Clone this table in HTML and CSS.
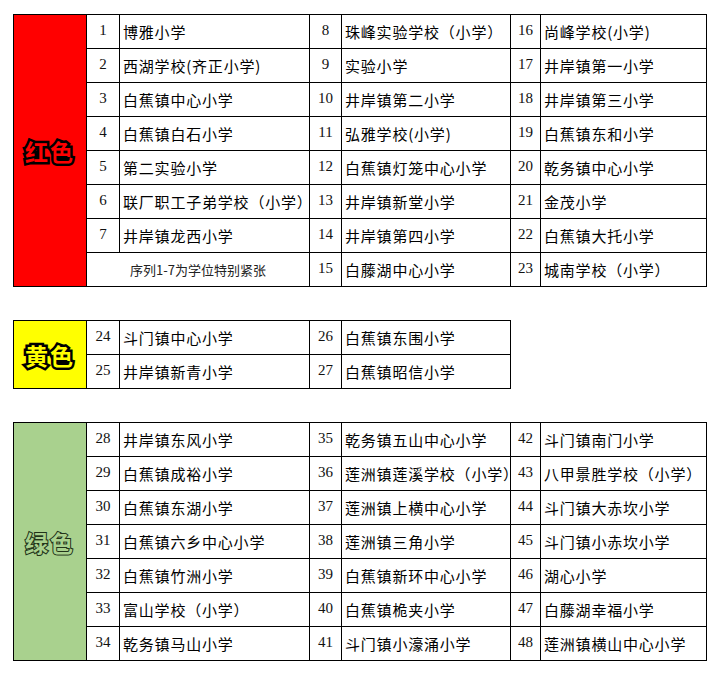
FILE: index.html
```html
<!DOCTYPE html>
<html lang="zh-CN">
<head>
<meta charset="utf-8">
<title>学位紧张程度</title>
<link rel="stylesheet" href="styles.css">
</head>
<body>
<div class="page">
<table class="grid">
  <colgroup><col class="c-label"><col class="c-num1"><col class="c-name1"><col class="c-num2"><col class="c-name2"><col class="c-num3"><col class="c-name3"></colgroup>
  <tr><td class="label red" rowspan="8"><span>红色</span></td><td class="num">1</td><td class="name">博雅小学</td><td class="num">8</td><td class="name">珠峰实验学校（小学）</td><td class="num">16</td><td class="name">尚峰学校(小学)</td></tr>
  <tr><td class="num">2</td><td class="name">西湖学校(齐正小学)</td><td class="num">9</td><td class="name">实验小学</td><td class="num">17</td><td class="name">井岸镇第一小学</td></tr>
  <tr><td class="num">3</td><td class="name">白蕉镇中心小学</td><td class="num">10</td><td class="name">井岸镇第二小学</td><td class="num">18</td><td class="name">井岸镇第三小学</td></tr>
  <tr><td class="num">4</td><td class="name">白蕉镇白石小学</td><td class="num">11</td><td class="name">弘雅学校(小学)</td><td class="num">19</td><td class="name">白蕉镇东和小学</td></tr>
  <tr><td class="num">5</td><td class="name">第二实验小学</td><td class="num">12</td><td class="name">白蕉镇灯笼中心小学</td><td class="num">20</td><td class="name">乾务镇中心小学</td></tr>
  <tr><td class="num">6</td><td class="name">联厂职工子弟学校（小学）</td><td class="num">13</td><td class="name">井岸镇新堂小学</td><td class="num">21</td><td class="name">金茂小学</td></tr>
  <tr><td class="num">7</td><td class="name">井岸镇龙西小学</td><td class="num">14</td><td class="name">井岸镇第四小学</td><td class="num">22</td><td class="name">白蕉镇大托小学</td></tr>
  <tr><td class="note" colspan="2">序列1-7为学位特别紧张</td><td class="num">15</td><td class="name">白藤湖中心小学</td><td class="num">23</td><td class="name">城南学校（小学）</td></tr>
</table>

<table class="grid small">
  <colgroup><col class="c-label"><col class="c-num1"><col class="c-name1"><col class="c-num2"><col class="c-name2"></colgroup>
  <tr><td class="label yellow" rowspan="2"><span>黄色</span></td><td class="num">24</td><td class="name">斗门镇中心小学</td><td class="num">26</td><td class="name">白蕉镇东围小学</td></tr>
  <tr><td class="num">25</td><td class="name">井岸镇新青小学</td><td class="num">27</td><td class="name">白蕉镇昭信小学</td></tr>
</table>

<table class="grid">
  <colgroup><col class="c-label"><col class="c-num1"><col class="c-name1"><col class="c-num2"><col class="c-name2"><col class="c-num3"><col class="c-name3"></colgroup>
  <tr><td class="label green" rowspan="7"><span>绿色</span></td><td class="num">28</td><td class="name">井岸镇东风小学</td><td class="num">35</td><td class="name">乾务镇五山中心小学</td><td class="num">42</td><td class="name">斗门镇南门小学</td></tr>
  <tr><td class="num">29</td><td class="name">白蕉镇成裕小学</td><td class="num">36</td><td class="name">莲洲镇莲溪学校（小学）</td><td class="num">43</td><td class="name">八甲景胜学校（小学）</td></tr>
  <tr><td class="num">30</td><td class="name">白蕉镇东湖小学</td><td class="num">37</td><td class="name">莲洲镇上横中心小学</td><td class="num">44</td><td class="name">斗门镇大赤坎小学</td></tr>
  <tr><td class="num">31</td><td class="name">白蕉镇六乡中心小学</td><td class="num">38</td><td class="name">莲洲镇三角小学</td><td class="num">45</td><td class="name">斗门镇小赤坎小学</td></tr>
  <tr><td class="num">32</td><td class="name">白蕉镇竹洲小学</td><td class="num">39</td><td class="name">白蕉镇新环中心小学</td><td class="num">46</td><td class="name">湖心小学</td></tr>
  <tr><td class="num">33</td><td class="name">富山学校（小学）</td><td class="num">40</td><td class="name">白蕉镇桅夹小学</td><td class="num">47</td><td class="name">白藤湖幸福小学</td></tr>
  <tr><td class="num">34</td><td class="name">乾务镇马山小学</td><td class="num">41</td><td class="name">斗门镇小濠涌小学</td><td class="num">48</td><td class="name">莲洲镇横山中心小学</td></tr>
</table>
</div>
</body>
</html>
```

FILE: styles.css
```css
html, body {
  margin: 0;
  padding: 0;
  background: #ffffff;
}

.page {
  padding: 14px 0 0 13px;
  display: flex;
  flex-direction: column;
  align-items: flex-start;
  gap: 33px;
}

.grid {
  border-collapse: collapse;
  table-layout: fixed;
  width: 693px;
  font-family: "Noto Sans CJK SC", "Noto Sans", sans-serif;
  color: #000;
}

.grid.small {
  width: 498px;
}

.c-label { width: 73px; }
.c-num1 { width: 33px; }
.c-name1 { width: 190px; }
.c-num2 { width: 32px; }
.c-name2 { width: 169px; }
.c-num3 { width: 30px; }
.c-name3 { width: 166px; }

.grid td {
  border: 1px solid #000;
  height: 33px;
  padding: 0;
  box-sizing: border-box;
  white-space: nowrap;
  overflow: visible;
}

.grid tr {
  height: 34px;
}

.num {
  font-family: "Liberation Serif", "DejaVu Serif", serif;
  font-size: 15px;
  text-align: center;
  vertical-align: middle;
  padding-bottom: 3px !important;
  color: #111;
}

.name {
  font-size: 15px;
  letter-spacing: 0.8px;
  padding-left: 3px !important;
  line-height: 20px;
  vertical-align: middle;
}

.note {
  font-size: 13px;
  text-align: center;
  color: #222;
  vertical-align: middle;
}

.label {
  text-align: center;
  vertical-align: middle;
  font-size: 23px;
  font-weight: 700;
  letter-spacing: 2px;
}

.label span {
  -webkit-text-stroke: 5px #000;
  paint-order: stroke fill;
}

.red {
  background: #ff0000;
  color: #ff0000;
}

.yellow {
  background: #ffff00;
  color: #ffff00;
}

.green {
  background: #a9d18e;
  color: #a9d18e;
}

.green span {
  -webkit-text-stroke: 2px #22331a;
}
```
